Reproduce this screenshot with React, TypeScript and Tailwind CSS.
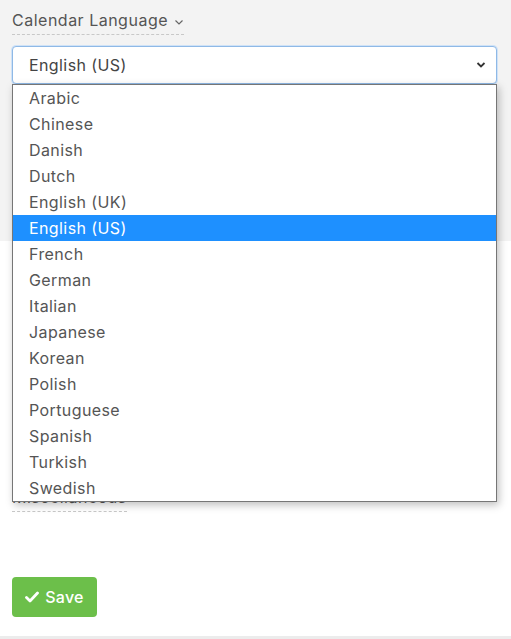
import React from 'react';

const languages = [
  'Arabic',
  'Chinese',
  'Danish',
  'Dutch',
  'English (UK)',
  'English (US)',
  'French',
  'German',
  'Italian',
  'Japanese',
  'Korean',
  'Polish',
  'Portuguese',
  'Spanish',
  'Turkish',
  'Swedish',
];

const FieldLabel: React.FC<{ text: string; caret?: boolean }> = ({ text, caret }) => (
  <div className="inline-flex items-center gap-1.5 border-b border-dashed border-[#c8c8c8] pb-0.5 text-[16px] tracking-[0.5px] text-[#555]">
    <span>{text}</span>
    {caret && (
      <svg width="10" height="10" viewBox="0 0 10 10" className="mt-1">
        <path d="M1.5 3.5 L5 7 L8.5 3.5" fill="none" stroke="#666" strokeWidth="1.2" />
      </svg>
    )}
  </div>
);

export default function App() {
  const selected = 'English (US)';
  return (
    <div className="w-[511px] h-[639px] bg-white font-['Inter',sans-serif] relative overflow-hidden">
      {/* settings block */}
      <div className="bg-[#f3f3f3] h-[241px] px-3 pt-[8px]">
        <FieldLabel text="Calendar Language" caret />
        <div className="relative mt-[11px]">
          <div className="h-[38px] w-[485px] rounded-[4px] border border-[#8fb9e6] bg-white shadow-[0_0_0_1px_#cfe2f7] flex items-center justify-between pl-4 pr-2.5 text-[16px] tracking-[0.4px] text-[#444]">
            <span>{selected}</span>
            <svg width="10" height="8" viewBox="0 0 10 8">
              <path d="M1.5 2 L5 5.5 L8.5 2" fill="none" stroke="#333" strokeWidth="1.8" />
            </svg>
          </div>

          {/* open option list */}
          <ul className="absolute left-0 top-[38px] z-10 w-[485px] border border-[#767676] bg-white shadow-[2px_3px_8px_rgba(0,0,0,0.25)] text-[16px] tracking-[0.4px]">
            {languages.map((lang) => (
              <li
                key={lang}
                className={
                  lang === selected
                    ? 'h-[26px] leading-[26px] pl-4 bg-[#1e90ff] text-white'
                    : 'h-[26px] leading-[26px] pl-4 text-[#555]'
                }
              >
                {lang}
              </li>
            ))}
          </ul>
        </div>
      </div>

      {/* lower block */}
      <div className="px-3 pt-[244px]">
        <FieldLabel text="Miscellaneous" />
        <div className="mt-[65px]">
          <button className="h-[40px] w-[85px] rounded-[4px] bg-[#6cbf4a] text-white text-[16px] tracking-[0.3px] font-medium flex items-center justify-center gap-1.5">
            <svg width="14" height="12" viewBox="0 0 14 12">
              <path d="M1.5 6.5 L5 10 L12.5 2" fill="none" stroke="white" strokeWidth="2.8" strokeLinecap="round" strokeLinejoin="round" />
            </svg>
            Save
          </button>
        </div>
      </div>

      <div className="absolute left-0 right-0 top-[636px] h-[3px] bg-[#ececec]" />
    </div>
  );
}
